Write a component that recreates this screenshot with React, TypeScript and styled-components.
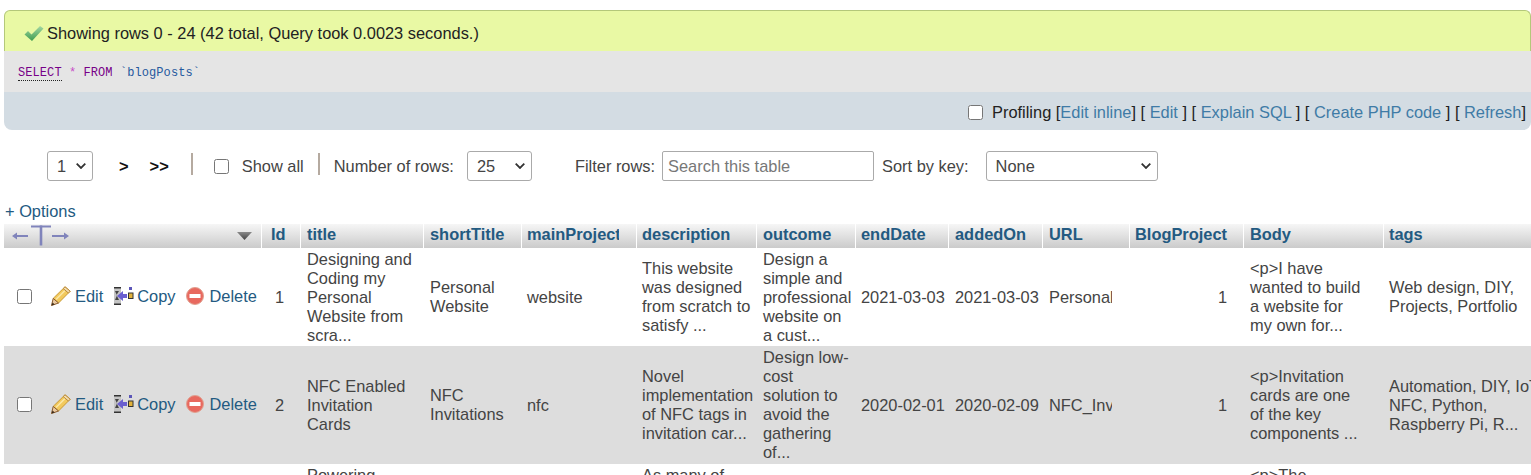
import React from "react";
import styled, { createGlobalStyle } from "styled-components";

const FS = "16.4px";

const Global = createGlobalStyle`
  html, body { margin: 0; padding: 0; height: 475px; overflow: hidden; background: #fff; }
  body { font-family: "Liberation Sans", Arial, sans-serif; font-size: ${FS}; color: #444; }
`;

const Page = styled.div`
  width: 1531px;
  height: 475px;
  overflow: hidden;
  padding: 10px 0 0 4px;
  box-sizing: border-box;
`;

const ResultBox = styled.div`
  width: 1527px;
`;

const Alert = styled.div`
  height: 41px;
  box-sizing: border-box;
  display: flex;
  align-items: center;
  gap: 3px;
  padding: 4px 0 0 19px;
  background: #e9f9a4;
  border: 1px solid #b4c87a;
  border-bottom: 0;
  border-radius: 6px 6px 0 0;
  color: #222;
`;

const SqlBox = styled.div`
  height: 41px;
  box-sizing: border-box;
  padding: 15px 0 0 14px;
  background: #e5e5e5;
  font-family: "Liberation Mono", monospace;
  font-size: 12px;
  letter-spacing: 0.08px;
  white-space: pre;
`;

const Kw = styled.span<{ $dotted?: boolean }>`
  color: #708;
  border-bottom: ${(p) => (p.$dotted ? "1px dotted #222" : "0")};
`;
const Op = styled.span`color: #c74cc7;`;
const Ident = styled.span`color: #25599e;`;

const SqlActions = styled.div`
  height: 38px;
  box-sizing: border-box;
  display: flex;
  align-items: center;
  justify-content: flex-end;
  padding: 2px 5px 0 0;
  background: #d3dce3;
  border-radius: 0 0 8px 8px;
  color: #222;
  white-space: pre;
`;

const SqlLink = styled.a`color: #3f7ba6;`;

const Check = styled.input.attrs({ type: "checkbox" })<{ $mr?: number }>`
  width: 15px;
  height: 15px;
  margin: 0 ${(p) => p.$mr ?? 0}px 0 0;
  flex: none;
`;

const Nav = styled.div`
  margin-top: 21px;
  height: 30px;
  display: flex;
  align-items: center;
  padding-left: 43px;
  color: #444;
  white-space: nowrap;
`;

const Select = styled.select<{ $w: number; $ml?: number; $pl?: number }>`
  appearance: none;
  width: ${(p) => p.$w}px;
  height: 30px;
  margin-left: ${(p) => p.$ml ?? 0}px;
  padding: 0 0 0 ${(p) => p.$pl ?? 9}px;
  background: #fff url("data:image/svg+xml,%3Csvg xmlns='http://www.w3.org/2000/svg' width='10' height='6' viewBox='0 0 10 6'%3E%3Cpath d='M.7.7 5 5 9.3.7' fill='none' stroke='%23333' stroke-width='1.8'/%3E%3C/svg%3E") no-repeat right 6px center;
  border: 1px solid #aaa;
  border-radius: 3px;
  font: ${FS} "Liberation Sans", sans-serif;
  color: #444;
  flex: none;
`;

const NavLink = styled.span<{ $ml: number }>`
  margin-left: ${(p) => p.$ml}px;
  font-weight: bold;
  color: #111;
`;

const Divider = styled.span<{ $ml: number }>`
  width: 2px;
  height: 22px;
  margin: -4px 0 0 ${(p) => p.$ml}px;
  background: #b5aaa0;
  flex: none;
`;

const Label = styled.span<{ $ml: number }>`
  margin-left: ${(p) => p.$ml}px;
  color: #444;
`;

const Search = styled.input`
  width: 212px;
  height: 30px;
  box-sizing: border-box;
  margin-left: 7px;
  padding: 0 5px;
  border: 1px solid #aaa;
  border-radius: 2px;
  font: ${FS} "Liberation Sans", sans-serif;
  flex: none;
  &::placeholder { color: #777; opacity: 1; }
`;

const CheckLabel = styled.div<{ $ml: number }>`
  display: flex;
  align-items: center;
  gap: 13px;
  margin-left: ${(p) => p.$ml}px;
`;

const Options = styled.div`
  margin: 21px 0 3px 1px;
  height: 19px;
  line-height: 19px;
  color: #235a81;
`;

const Table = styled.table`
  width: 1536px;
  table-layout: fixed;
  border-collapse: separate;
  border-spacing: 0;
`;

const Th = styled.th<{ $pl?: number }>`
  height: 24px;
  padding: 1px 0 0 ${(p) => p.$pl ?? 5}px;
  box-sizing: border-box;
  text-align: left;
  vertical-align: top;
  line-height: 19px;
  white-space: nowrap;
  overflow: hidden;
  color: #235a81;
  font-weight: bold;
  font-size: ${FS};
  background: linear-gradient(#f6f6f6, #cbcbcb);
  border-right: 1px solid #fff;
  &:last-child { border-right: 0; }
`;

const HeadInner = styled.div`
  display: flex;
  align-items: center;
  justify-content: space-between;
  height: 21px;
  padding: 0 9px 0 3px;
`;

const Clip = styled.span<{ $w: number }>`
  display: inline-block;
  width: ${(p) => p.$w}px;
  overflow: hidden;
  white-space: nowrap;
  vertical-align: top;
`;

const Row = styled.tr<{ $even?: boolean; $h: number }>`
  height: ${(p) => p.$h}px;
  background: ${(p) => (p.$even ? "#ddd" : "#fff")};
`;

const Td = styled.td<{ $right?: number; $pl?: number }>`
  padding: 1.5px ${(p) => p.$right ?? 0}px 1.5px ${(p) => p.$pl ?? 5}px;
  box-sizing: border-box;
  line-height: 19px;
  vertical-align: middle;
  color: #444;
  white-space: pre;
  text-align: ${(p) => (p.$right !== undefined ? "right" : "left")};
`;

const Actions = styled.div`
  display: flex;
  align-items: center;
  margin-top: -2px;
  padding-left: 8px;
  color: #235a81;
  white-space: nowrap;
`;

const Action = styled.span<{ $ml: number; $gap: number }>`
  display: flex;
  align-items: center;
  gap: ${(p) => p.$gap}px;
  margin-left: ${(p) => p.$ml}px;
`;

const Tick = () => (
  <svg width="20" height="17" viewBox="0 0 20 17">
    <defs>
      <linearGradient id="tk" x1="0" y1="0" x2="0" y2="1">
        <stop offset="0" stopColor="#a3d8a3" />
        <stop offset="1" stopColor="#3f9c4f" />
      </linearGradient>
    </defs>
    <path d="M0.5 9.5 L4 6 L7.5 9.5 L16 1 L19.5 3.5 L8 16 Z" fill="url(#tk)" />
  </svg>
);

const Pencil = () => (
  <svg width="20" height="20" viewBox="0 0 20 20">
    <path d="M14 0.8 L19.2 5.2 L7.5 17 L2.2 12.4 Z" fill="#f2c95c" stroke="#c99a35" strokeWidth="1" />
    <path d="M5 13.5 L15 3.5" stroke="#fbe7a6" strokeWidth="1.6" />
    <path d="M14 0.8 L19.2 5.2 L17.4 7 L12.2 2.6 Z" fill="#f3dcae" stroke="#b9893a" strokeWidth="1" />
    <path d="M2.2 12.4 L7.5 17 L0.5 19.5 Z" fill="#e9c9a0" stroke="#8a5a2a" strokeWidth="1" />
    <path d="M0.5 19.5 L3.6 18.4 L1.6 16.4 Z" fill="#3a2a1a" />
  </svg>
);

const CopyIcon = () => (
  <svg width="20" height="20" viewBox="0 0 20 20">
    <rect x="0" y="2" width="7" height="16" fill="#c4c4c4" />
    <rect x="0" y="1" width="7" height="1.5" fill="#333" />
    <rect x="0" y="17.5" width="7" height="1.5" fill="#333" />
    <path d="M1 5 H5 L2.5 9 L5 14 H1 L3 9.5 Z" fill="#444" />
    <path d="M3 10 L9 5 L9 8 L13 8 L13 12 L9 12 L9 15 Z" fill="#6a5fd0" />
    <rect x="15" y="1" width="3" height="3" fill="#5b55b8" />
    <rect x="14.5" y="7" width="4.5" height="5.5" fill="#e2b23a" stroke="#333" strokeWidth="1" />
  </svg>
);

const DeleteIcon = () => (
  <svg width="18" height="18" viewBox="0 0 18 18">
    <circle cx="9" cy="9" r="8.5" fill="#e8695f" stroke="#e0a090" strokeWidth="1" />
    <rect x="3.5" y="7" width="11" height="4" fill="#fff" />
  </svg>
);

const ColDrag = () => (
  <svg width="57" height="21" viewBox="0 0 57 21" fill="#8084bb">
    <path d="M0 11 L5 7.5 L5 10 L16 10 L16 12 L5 12 L5 14.5 Z" />
    <rect x="19" y="0.5" width="20" height="2" />
    <rect x="27.7" y="0.5" width="2.6" height="20" />
    <path d="M57 11 L52 7.5 L52 10 L40 10 L40 12 L52 12 L52 14.5 Z" />
  </svg>
);

const SortTri = () => (
  <svg width="15" height="8" viewBox="0 0 15 8">
    <defs>
      <linearGradient id="st" x1="0" y1="0" x2="0" y2="1">
        <stop offset="0" stopColor="#8a8a8a" />
        <stop offset="1" stopColor="#444" />
      </linearGradient>
    </defs>
    <path d="M0 0 H15 L7.5 8 Z" fill="url(#st)" />
  </svg>
);

const widths = [258, 39, 123, 98, 115, 120, 99, 93, 94, 87, 114, 140, 157];
const heads = ["Id", "title", "shortTitle", "mainProject", "description", "outcome", "endDate", "addedOn", "URL", "BlogProject", "Body", "tags"];
const headPads = [9, 6, 6, 5, 5, 6, 5, 6, 6, 5, 6, 5];

type Rec = { id: string; title: string; short: string; main: string; desc: string; outcome: string; end: string; added: string; url: string; body: string; tags: string };

const rows: Rec[] = [
  {
    id: "1",
    title: "Designing and\nCoding my\nPersonal\nWebsite from\nscra...",
    short: "Personal\nWebsite",
    main: "website",
    desc: "This website\nwas designed\nfrom scratch to\nsatisfy ...",
    outcome: "Design a\nsimple and\nprofessional\nwebsite on\na cust...",
    end: "2021-03-03",
    added: "2021-03-03",
    url: "Personal_Website",
    body: "<p>I have\nwanted to build\na website for\nmy own for...",
    tags: "Web design, DIY,\nProjects, Portfolio",
  },
  {
    id: "2",
    title: "NFC Enabled\nInvitation\nCards",
    short: "NFC\nInvitations",
    main: "nfc",
    desc: "Novel\nimplementation\nof NFC tags in\ninvitation car...",
    outcome: "Design low-\ncost\nsolution to\navoid the\ngathering\nof...",
    end: "2020-02-01",
    added: "2020-02-09",
    url: "NFC_Invitations",
    body: "<p>Invitation\ncards are one\nof the key\ncomponents ...",
    tags: "Automation, DIY, IoT,\nNFC, Python,\nRaspberry Pi, R...",
  },
  {
    id: "3",
    title: "Powering\nHome Devices\nwith Solar\nPanels and\nBatteries\nfor...",
    short: "Solar Power",
    main: "solar",
    desc: "As many of\nthe devices\nat home need\npower all\nday long\nand...",
    outcome: "Design a\nsolar power\nsystem",
    end: "2020-01-15",
    added: "2020-01-20",
    url: "Solar_Power",
    body: "<p>The\nidea of\npowering\ndevices at\nhome with\nthe...",
    tags: "Solar, DIY, Energy",
  },
];

const heights = [98, 118, 118];

export default function App() {
  return (
    <Page>
      <Global />
      <ResultBox>
        <Alert>
          <Tick />
          <span>Showing rows 0 - 24 (42 total, Query took 0.0023 seconds.)</span>
        </Alert>
        <SqlBox>
          <Kw $dotted>SELECT</Kw> <Op>*</Op> <Kw>FROM</Kw> <Ident>`blogPosts`</Ident>
        </SqlBox>
        <SqlActions>
          <Check $mr={9} />
          <span>
            Profiling [<SqlLink>Edit inline</SqlLink>] [ <SqlLink>Edit</SqlLink> ] [ <SqlLink>Explain SQL</SqlLink> ] [ <SqlLink>Create PHP code</SqlLink> ] [ <SqlLink>Refresh</SqlLink>]
          </span>
        </SqlActions>
      </ResultBox>
      <Nav>
        <Select $w={46} defaultValue="1">
          <option>1</option>
        </Select>
        <NavLink $ml={26}>&gt;</NavLink>
        <NavLink $ml={21}>&gt;&gt;</NavLink>
        <Divider $ml={22} />
        <CheckLabel $ml={21}>
          <Check />
          <span>Show all</span>
        </CheckLabel>
        <Divider $ml={14} />
        <Label $ml={14}>Number of rows:</Label>
        <Select $w={65} $ml={13} defaultValue="25">
          <option>25</option>
        </Select>
        <Label $ml={43}>Filter rows:</Label>
        <Search placeholder="Search this table" />
        <Label $ml={8}>Sort by key:</Label>
        <Select $w={172} $ml={17} defaultValue="None">
          <option>None</option>
        </Select>
      </Nav>
      <Options>+ Options</Options>
      <Table>
        <colgroup>
          {widths.map((w, i) => (
            <col key={i} style={{ width: w }} />
          ))}
        </colgroup>
        <thead>
          <tr>
            <Th>
              <HeadInner>
                <ColDrag />
                <SortTri />
              </HeadInner>
            </Th>
            {heads.map((h, i) => (
              <Th key={h} $pl={headPads[i]}>{h === "mainProject" ? <Clip $w={92}>{h}</Clip> : h}</Th>
            ))}
          </tr>
        </thead>
        <tbody>
          {rows.map((r, i) => (
            <Row key={r.id} $even={i % 2 === 1} $h={heights[i]}>
              <Td>
                <Actions>
                  <Check />
                  <Action $ml={19} $gap={4}><Pencil /><span>Edit</span></Action>
                  <Action $ml={11} $gap={3}><CopyIcon /><span>Copy</span></Action>
                  <Action $ml={10} $gap={6}><DeleteIcon /><span>Delete</span></Action>
                </Actions>
              </Td>
              <Td $right={17}>{r.id}</Td>
              <Td $pl={6}>{r.title}</Td>
              <Td $pl={6}>{r.short}</Td>
              <Td>{r.main}</Td>
              <Td>{r.desc}</Td>
              <Td $pl={6}>{r.outcome}</Td>
              <Td>{r.end}</Td>
              <Td $pl={6}>{r.added}</Td>
              <Td $pl={6}><Clip $w={63}>{r.url}</Clip></Td>
              <Td $right={17}>1</Td>
              <Td $pl={6}>{r.body}</Td>
              <Td>{r.tags}</Td>
            </Row>
          ))}
        </tbody>
      </Table>
    </Page>
  );
}
